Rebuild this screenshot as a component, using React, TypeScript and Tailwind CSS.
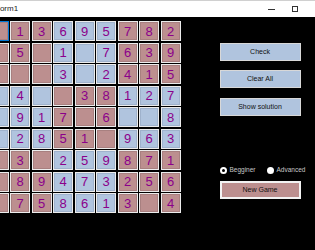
import React from 'react'

const rows = [
  '.13695782',
  '25.1.7639',
  '9..3.2415',
  '64..38127',
  '.917.6..8',
  '.2851.963',
  '53.259871',
  '189473256',
  '2758613.4',
]

function Cell({ value, pink, focused, edge }: { value: string; pink: boolean; focused: boolean; edge: boolean }) {
  return (
    <div
      className={`flex items-center justify-center w-[20px] h-[20px] border ${
        focused ? 'border-[#0078d7]' : 'border-[#ececec]'
      } ${
        pink
          ? 'bg-[#bc8f8f] shadow-[inset_0_0_0_1px_#a88080]'
          : 'bg-[#b0c4de] shadow-[inset_0_0_0_1px_#9fb2cc]'
      } ${edge ? 'pr-[4px]' : ''} text-[13px] leading-none text-[#8b008b] font-['Liberation_Sans',Arial,sans-serif]`}
    >
      {value === '.' ? '' : value}
    </div>
  )
}

function WinButton({ label, pink }: { label: string; pink?: boolean }) {
  return (
    <div
      className={`flex items-center justify-center w-[81px] h-[18px] text-[7px] text-[#111] ${
        pink
          ? 'bg-[#bc8f8f] border-2 border-[#f2f2f2]'
          : 'bg-[#b0c4de] border border-[#d8d8d8]'
      }`}
    >
      {label}
    </div>
  )
}

export default function App() {
  return (
    <div className="w-[315px] h-[250px] bg-black overflow-hidden font-['Liberation_Sans',Arial,sans-serif]">
      {/* Title bar */}
      <div className="h-[17px] bg-white flex items-center border-t border-[#d0d0d0]">
        <span className="ml-[-5px] text-[8px] text-[#222]">Form1</span>
        <div className="flex-1" />
        <div className="w-[7px] h-px bg-[#333] mr-[17px]" />
        <div className="w-[6px] h-[6px] border border-[#333] mr-[17px]" />
      </div>

      <div className="flex">
        {/* Sudoku grid */}
        <div className="ml-[-11.5px] mt-[4px] grid grid-cols-[repeat(9,20px)] gap-[1.5px]">
          {rows.map((row, r) =>
            row.split('').map((v, c) => (
              <Cell
                key={`${r}-${c}`}
                value={v}
                pink={(Math.floor(r / 3) + Math.floor(c / 3)) % 2 === 0}
                focused={r === 0 && c === 0}
                edge={c === 0}
              />
            ))
          )}
        </div>

        {/* Controls */}
        <div className="ml-[39px] pt-[26px] flex flex-col">
          <WinButton label="Check" />
          <div className="h-[9px]" />
          <WinButton label="Clear All" />
          <div className="h-[10px]" />
          <WinButton label="Show solution" />

          <div className="mt-[50px] flex items-center text-[6.5px] text-[#c8c8c8] h-[8px]">
            <span className="w-[7px] h-[7px] rounded-full border-[2px] border-white bg-black" />
            <span className="ml-[3px]">Begginer</span>
            <span className="ml-[11px] w-[7px] h-[7px] rounded-full bg-white" />
            <span className="ml-[3px]">Advanced</span>
          </div>

          <div className="mt-[7px]">
            <WinButton label="New Game" pink />
          </div>
        </div>
      </div>
    </div>
  )
}
